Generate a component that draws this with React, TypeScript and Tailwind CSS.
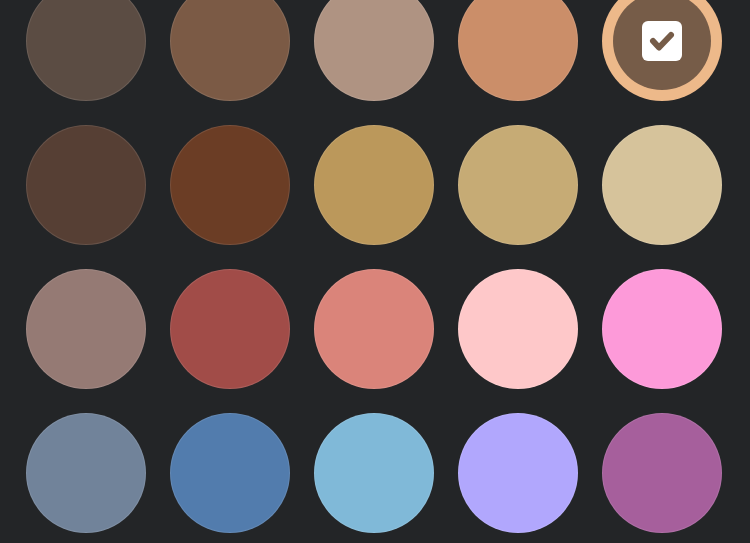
import React from "react";

const colors = [
  "#5b4c43", "#7b5a45", "#af9382", "#cb8e69", "#765c48",
  "#563f34", "#6b3d25", "#bb985b", "#c6ab75", "#d6c39b",
  "#957a74", "#a14c48", "#da847a", "#fec8c9", "#fd9ad9",
  "#71839a", "#527cad", "#80b9d8", "#b1a7fd", "#a65f9c",
];

export default function App() {
  return (
    <div className="w-[750px] h-[543px] overflow-hidden bg-[#232527]">
      <div className="grid grid-cols-[repeat(5,120px)] gap-6 pl-[26px] mt-[-19px]">
        {colors.map((c, i) =>
          i === 4 ? (
            <div
              key={i}
              className="w-[120px] h-[120px] rounded-full bg-[#edb98a] p-[11px]"
            >
              <div
                className="w-full h-full rounded-full flex items-center justify-center"
                style={{ backgroundColor: c }}
              >
                <div className="w-10 h-10 rounded-md bg-white">
                  <svg width="40" height="40" viewBox="0 0 40 40">
                    <polyline
                      points="11,20 17,26.5 29,14"
                      fill="none"
                      stroke="#765c48"
                      strokeWidth="6"
                      strokeLinecap="round"
                      strokeLinejoin="round"
                    />
                  </svg>
                </div>
              </div>
            </div>
          ) : (
            <div
              key={i}
              className="w-[120px] h-[120px] rounded-full border border-white/10"
              style={{ backgroundColor: c }}
            />
          )
        )}
      </div>
    </div>
  );
}
